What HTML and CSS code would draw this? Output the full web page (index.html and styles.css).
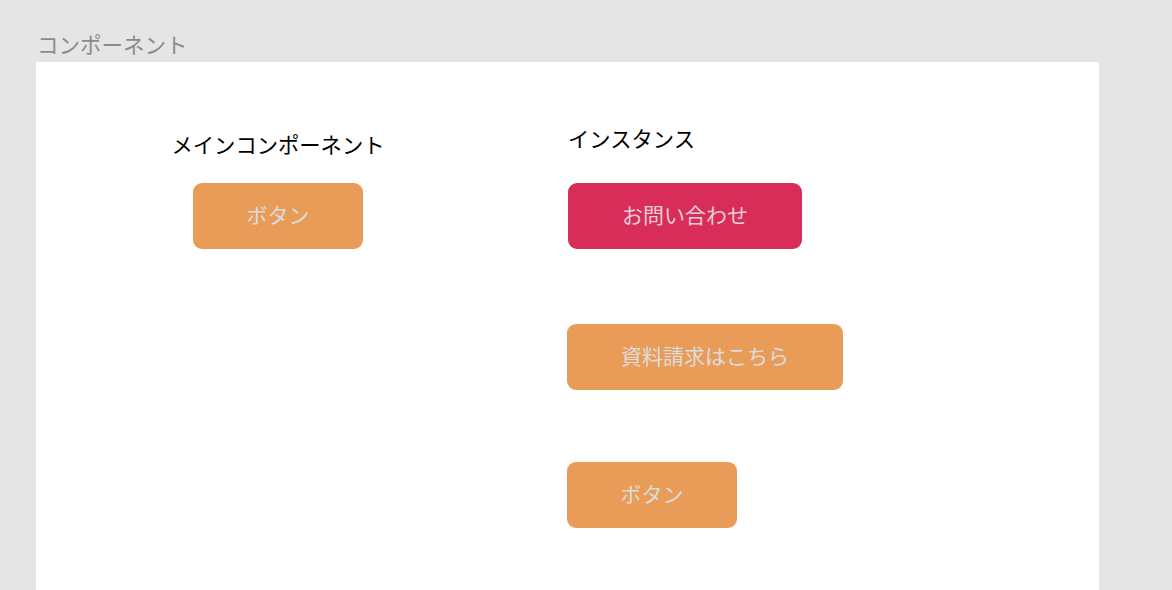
FILE: index.html
```html
<!DOCTYPE html>
<html lang="ja">
<head>
	<meta charset="utf-8">
	<title>コンポーネント</title>
	<link rel="stylesheet" href="styles.css">
</head>
<body>
	<div class="frame-title">コンポーネント</div>
	<div class="frame">
		<div class="col col-main">
			<div class="col-label">メインコンポーネント</div>
			<button class="btn btn-orange btn-main" type="button">ボタン</button>
		</div>
		<div class="col col-instance">
			<div class="col-label">インスタンス</div>
			<button class="btn btn-red btn-contact" type="button">お問い合わせ</button>
			<button class="btn btn-orange btn-docs" type="button">資料請求はこちら</button>
			<button class="btn btn-orange btn-plain" type="button">ボタン</button>
		</div>
	</div>
</body>
</html>
```

FILE: styles.css
```css
html, body {
	margin: 0;
	padding: 0;
	height: 100%;
}
body {
	background: #e5e5e5;
	font-family: "Noto Sans CJK JP", "Noto Sans", sans-serif;
	overflow: hidden;
}
.frame-title {
	padding: 26px 0 0 37px;
	font-size: 21.5px;
	line-height: 36px;
	height: 36px;
	color: #8c8c8c;
}
.frame {
	margin-left: 36px;
	width: 1063px;
	height: 528px;
	background: #fff;
	display: flex;
}
.col {
	display: flex;
	flex-direction: column;
}
.col-label {
	font-size: 21.3px;
	line-height: 24px;
	color: #000;
	white-space: nowrap;
}
.col-main {
	width: 210px;
	margin-left: 137px;
	padding-top: 70px;
	align-items: center;
}
.col-instance {
	margin-left: 185px;
	padding-top: 64px;
	align-items: flex-start;
}
.col-instance .btn-contact {
	margin-top: 33px;
}
.btn {
	height: 66px;
	border: none;
	border-radius: 9px;
	font-family: inherit;
	font-size: 21px;
	line-height: 24px;
	color: #dcdcdc;
	padding: 0 0 5px;
	cursor: pointer;
}
.btn-orange {
	background: #e89c58;
}
.btn-red {
	background: #d92d59;
	color: #e8cdd4;
}
.btn-main {
	width: 170px;
	margin-top: 27px;
}
.btn-contact {
	width: 234px;
}
.btn-docs {
	width: 276px;
	margin-top: 75px;
	margin-left: -1px;
}
.btn-plain {
	width: 170px;
	margin-top: 72px;
	margin-left: -1px;
}
```
